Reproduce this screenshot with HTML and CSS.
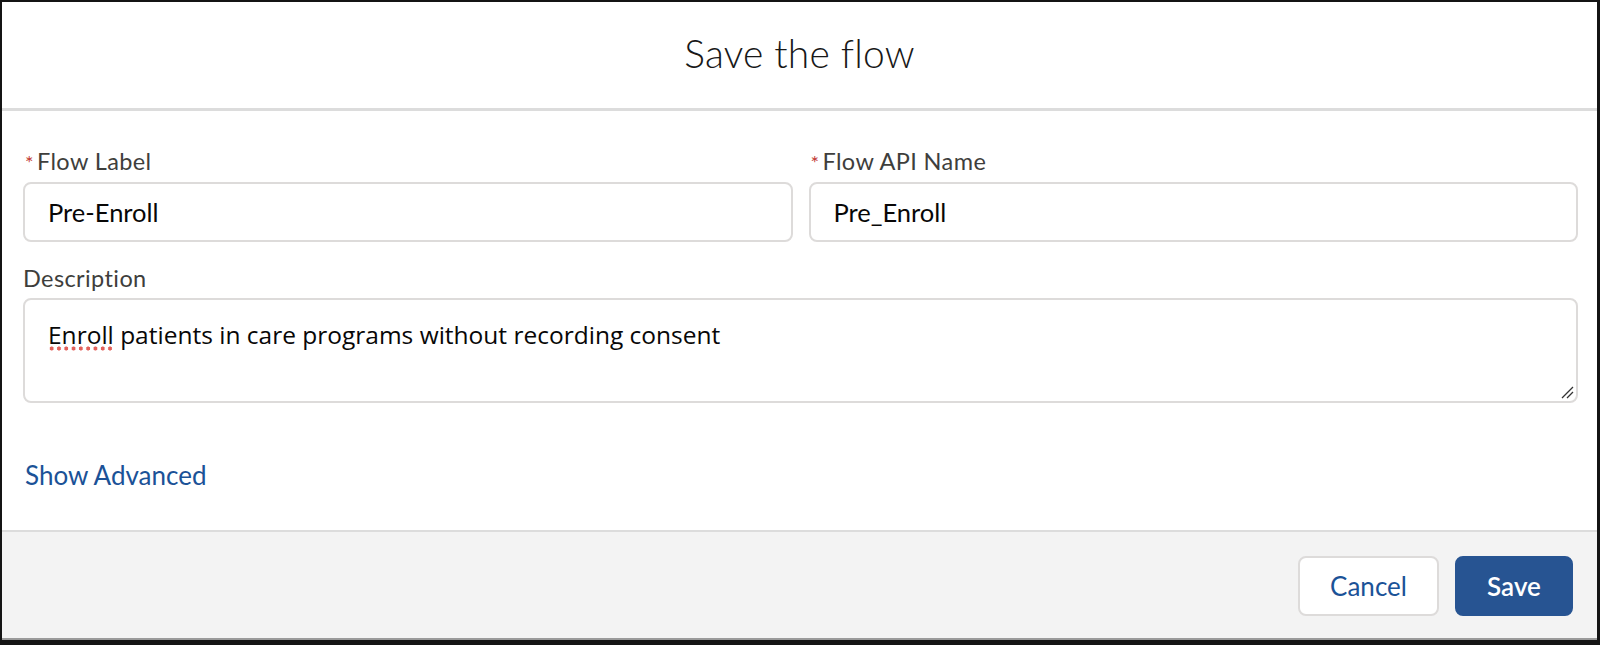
FILE: index.html
```html
<!DOCTYPE html>
<html lang="en">
<head>
<meta charset="utf-8">
<title>Save the flow</title>
<link rel="stylesheet" href="styles.css">
</head>
<body>
<div class="modal">
  <header class="modal-header">
    <h1 class="modal-title">Save the flow</h1>
  </header>
  <section class="modal-body">
    <div class="row">
      <div class="field">
        <label class="label"><span class="req">*</span>Flow Label</label>
        <div class="input">Pre-Enroll</div>
      </div>
      <div class="field">
        <label class="label"><span class="req">*</span>Flow API Name</label>
        <div class="input">Pre_Enroll</div>
      </div>
    </div>
    <div class="field field-desc">
      <label class="label">Description</label>
      <div class="textarea"><span class="misspelled">Enroll</span> patients in care programs without recording consent<svg class="grip" width="14" height="14" viewBox="0 0 14 14"><path d="M2 13 L13 2 M7 13 L13 7" stroke="#333" stroke-width="1.3" fill="none"/></svg></div>
    </div>
    <a class="link" href="#">Show Advanced</a>
  </section>
  <footer class="modal-footer">
    <button class="btn btn-neutral">Cancel</button>
    <button class="btn btn-brand">Save</button>
  </footer>
</div>
</body>
</html>
```
FILE: styles.css
```css
* { box-sizing: border-box; }
html, body { margin: 0; padding: 0; background: #fff; }
body { font-family: "Lato", "Liberation Sans", sans-serif; color: #181818; }

.modal {
  width: 1600px;
  height: 645px;
  border: 2px solid #141414;
  border-right-width: 3px;
  border-bottom-width: 5px;
  display: flex;
  flex-direction: column;
  background: #fff;
}

.modal-header {
  height: 109px;
  border-bottom: 3px solid #dcdcdc;
  display: flex;
  align-items: center;
  justify-content: center;
  padding-bottom: 5px;
}
.modal-title {
  margin: 0;
  font-weight: 300;
  font-size: 39px;
  color: #181818;
  letter-spacing: 0.2px;
}

.modal-body {
  flex: 1;
  padding: 36px 19px 0 21px;
  display: flex;
  flex-direction: column;
}
.row {
  display: flex;
  gap: 16px;
}
.field { flex: 1; display: flex; flex-direction: column; }
.label {
  font-size: 23.5px;
  letter-spacing: 0.4px;
  height: 28px;
  line-height: 28px;
  color: #3e3e3c;
  margin-bottom: 7px;
  padding-left: 2px;
}
.req { color: #c23934; margin-right: 3px; font-size: 20px; }
.input {
  height: 60px;
  border: 2px solid #dddbda;
  border-radius: 8px;
  padding: 0 23px;
  display: flex;
  align-items: center;
  font-size: 25.5px;
  color: #080707;
}
.field-desc { margin-top: 22px; flex: none; }
.field-desc .label { margin-bottom: 6px; padding-left: 0; }
.textarea {
  position: relative;
  height: 105px;
  border: 2px solid #dddbda;
  border-radius: 8px;
  padding: 19px 23px;
  font-family: "Open Sans", "Liberation Sans", sans-serif;
  font-size: 24.5px;
  line-height: 32px;
  color: #080707;
}
.misspelled {
  background-image: radial-gradient(circle at 50% 50%, #e2605a 1.8px, transparent 2.3px);
  background-size: 7.3px 5px;
  background-repeat: repeat-x;
  background-position: 0 100%;
}
.grip { position: absolute; right: 2px; bottom: 2px; }

.link {
  margin-top: 56px;
  padding-left: 2px;
  font-size: 26px;
  color: #1b5297;
  text-decoration: none;
  align-self: flex-start;
}

.modal-footer {
  height: 110px;
  background: #f3f3f3;
  border-top: 2px solid #dcdcdc;
  border-bottom: 2px solid #9a9a9a;
  display: flex;
  justify-content: flex-end;
  align-items: flex-start;
  gap: 16px;
  padding: 24px 24px 0 0;
}
.btn {
  height: 60px;
  border-radius: 8px;
  font-family: "Lato", "Liberation Sans", sans-serif;
  font-size: 26px;
  padding: 0;
  cursor: pointer;
}
.btn-neutral {
  width: 141px;
  background: #fff;
  border: 2px solid #dddbda;
  color: #1b5297;
}
.btn-brand {
  width: 118px;
  background: #275492;
  border: 2px solid #275492;
  color: #fff;
  font-weight: 600;
}
```
